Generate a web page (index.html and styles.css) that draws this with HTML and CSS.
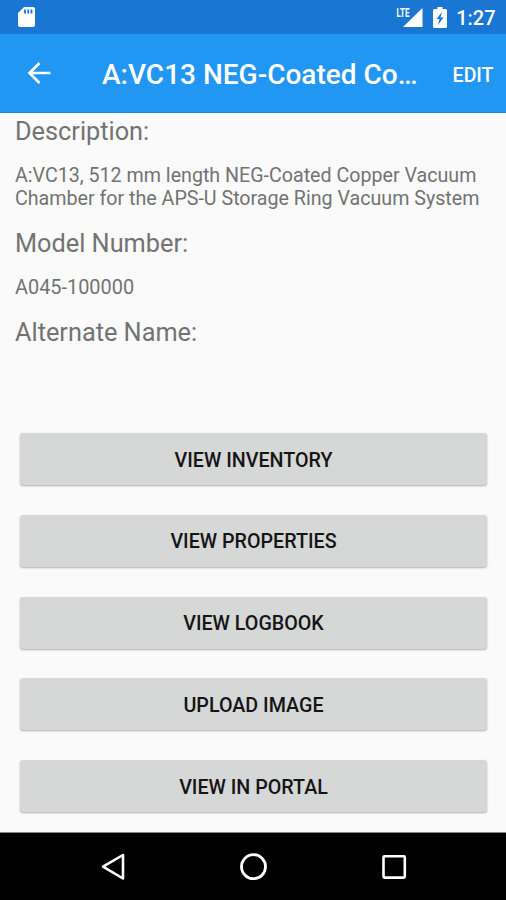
FILE: index.html
```html
<!DOCTYPE html>
<html lang="en">
<head>
<meta charset="utf-8">
<title>Catalog item</title>
<link rel="stylesheet" href="styles.css">
</head>
<body>
<div class="screen">
  <div class="status">
    <svg class="sd" width="17" height="20" viewBox="0 0 17 20"><path fill="#fff" d="M6 0h9q2 0 2 2v16q0 2-2 2H2q-2 0-2-2V6z"/><path stroke="#1976d2" stroke-width="1.8" d="M7 2.500v4M10.300 2.500v4M13.500 2.500v4"/></svg>
    <div class="status-right">
      <svg class="signal" width="27" height="22" viewBox="0 0 27 22"><path fill="#fff" d="M26.500 2v19H7z"/><path fill="#1976d2" d="M0 0h14.500v11.500H0z"/><text x="0.500" y="10.500" class="lte" textLength="13" lengthAdjust="spacingAndGlyphs">LTE</text></svg>
      <svg class="battery" width="14" height="21" viewBox="0 0 14 21"><path fill="#fff" d="M4.500 0h5v2h3q1.500 0 1.500 1.500v16q0 1.500-1.500 1.500h-11Q0 21 0 19.500v-16Q0 2 1.500 2h3z"/><path fill="#1976d2" d="M9 5L3.500 12h3L5 18l5.500-7.500h-3z"/></svg>
      <span class="clock">1:27</span>
    </div>
  </div>
  <header class="bar">
    <svg class="back" width="24" height="22" viewBox="0 0 24 22"><path fill="none" stroke="#fff" stroke-width="2.700" d="M23.500 11H3M12.500 1L2.500 11l10 10"/></svg>
    <h1 class="title">A:VC13 NEG-Coated Co…</h1>
    <span class="edit">EDIT</span>
  </header>
  <main class="content">
    <h2>Description:</h2>
    <p>A:VC13, 512 mm length NEG-Coated Copper Vacuum<br>Chamber for the APS-U Storage Ring Vacuum System</p>
    <h2>Model Number:</h2>
    <p class="model">A045-100000</p>
    <h2>Alternate Name:</h2>
    <div class="actions">
      <button>VIEW INVENTORY</button>
      <button>VIEW PROPERTIES</button>
      <button>VIEW LOGBOOK</button>
      <button>UPLOAD IMAGE</button>
      <button>VIEW IN PORTAL</button>
    </div>
  </main>
  <nav class="nav">
    <svg width="26" height="30" viewBox="0 0 26 30"><path fill="none" stroke="#fff" stroke-width="2.600" stroke-linejoin="round" d="M24 3v23.500L4 14.700z"/></svg>
    <svg width="30" height="30" viewBox="0 0 30 30"><circle cx="15.500" cy="14.700" r="12" fill="none" stroke="#fff" stroke-width="2.800"/></svg>
    <svg width="26" height="30" viewBox="0 0 26 30"><rect x="2.500" y="4.300" width="21.300" height="21.300" rx="1" fill="none" stroke="#fff" stroke-width="2.600"/></svg>
  </nav>
</div>
</body>
</html>
```

FILE: styles.css
```css
* { box-sizing: border-box; }
body { margin: 0; font-family: Roboto, sans-serif; background: #fafafa; }
.screen { width: 506px; height: 900px; display: flex; flex-direction: column; overflow: hidden; }
.status { height: 34px; flex: none; background: #1976d2; display: flex; align-items: center; justify-content: space-between; padding: 0 10.500px 0 17.500px; }
.status-right { display: flex; align-items: center; }
.lte { font: 700 12.500px Roboto, sans-serif; fill: #fff; }
.battery { margin-left: 10px; }
.clock { margin-left: 9.500px; color: #fff; font-size: 20px; font-weight: 500; line-height: 32px; padding-top: 2px; }
.bar { height: 79px; flex: none; background: #2196f3; border-bottom: 1px solid #1a87e4; color: #fff; display: flex; align-items: center; padding: 0 12.500px 0 27px; }
.title { margin: 4px 0 0 51px; font-size: 28px; line-height: 36px; font-weight: 500; white-space: nowrap; }
.edit { margin: 4px 0 0 auto; font-size: 19.500px; font-weight: 500; }
.content { flex: 1; padding: 1px 19px 0 15px; color: #737373; }
h2 { margin: 0; font-size: 25.300px; font-weight: 400; line-height: 36px; }
p { margin: 14px 0 16px; font-size: 19.650px; line-height: 23px; white-space: nowrap; }
.model { font-size: 19.900px; }
.actions { margin: 82.300px 0 0 5px; display: flex; flex-direction: column; gap: 29.700px; }
button { height: 52px; padding: 2px 0 0; border: 0; border-radius: 3px; background: #d6d7d7; color: #151515; font: 500 19.700px Roboto, sans-serif; box-shadow: 0 1px 2px rgba(0,0,0,.3); }
.nav { height: 68px; flex: none; background: #000; border-top: 1px solid #858585; display: flex; align-items: center; justify-content: space-between; padding: 0 99px; }
```
